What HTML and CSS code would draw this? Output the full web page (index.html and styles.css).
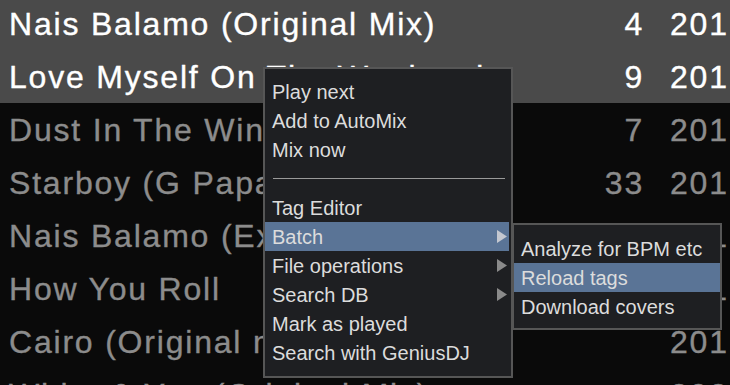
FILE: index.html
```html
<!DOCTYPE html>
<html>
<head>
<meta charset="utf-8">
<link rel="stylesheet" href="styles.css">
</head>
<body>
<div class="list">
  <div class="row sel"><span class="title">Nais Balamo (Original Mix)</span><span class="count">4</span><span class="year">2016</span></div>
  <div class="row sel"><span class="title">Love Myself On The Weekend</span><span class="count">9</span><span class="year">2016</span></div>
  <div class="row"><span class="title">Dust In The Wind</span><span class="count">7</span><span class="year">2016</span></div>
  <div class="row"><span class="title">Starboy (G Papa remix)</span><span class="count">33</span><span class="year">2016</span></div>
  <div class="row"><span class="title">Nais Balamo (Extended Mix)</span><span class="count">2</span><span class="year">2016</span></div>
  <div class="row"><span class="title">How You Roll</span><span class="count">5</span><span class="year">2016</span></div>
  <div class="row"><span class="title">Cairo (Original mix)</span><span class="count"></span><span class="year">2016</span></div>
  <div class="row"><span class="title">White &amp; You (Original Mix)</span><span class="count"></span><span class="year">2020</span></div>
</div>

<div class="menu">
  <div class="item">Play next</div>
  <div class="item">Add to AutoMix</div>
  <div class="item">Mix now</div>
  <div class="sep"><span class="line"></span></div>
  <div class="item">Tag Editor</div>
  <div class="item active">Batch<svg class="arrow" width="10" height="13" viewBox="0 0 10 13"><path d="M0 0 L10 6.5 L0 13 Z"/></svg></div>
  <div class="item">File operations<svg class="arrow" width="10" height="13" viewBox="0 0 10 13"><path d="M0 0 L10 6.5 L0 13 Z"/></svg></div>
  <div class="item">Search DB<svg class="arrow" width="10" height="13" viewBox="0 0 10 13"><path d="M0 0 L10 6.5 L0 13 Z"/></svg></div>
  <div class="item">Mark as played</div>
  <div class="item">Search with GeniusDJ</div>
</div>

<div class="submenu">
  <div class="item">Analyze for BPM etc</div>
  <div class="item active">Reload tags</div>
  <div class="item">Download covers</div>
</div>
</body>
</html>
```

FILE: styles.css
```css
html, body {
  margin: 0;
  padding: 0;
}
body {
  width: 730px;
  height: 385px;
  overflow: hidden;
  background: #0a0a0a;
  position: relative;
  font-family: "Liberation Sans", Arial, sans-serif;
}
.list {
  margin-top: -3px;
}
.row {
  display: grid;
  grid-template-columns: 580px 64px 84px;
  column-gap: 0;
  height: 53px;
  line-height: 54px;
  font-size: 32px;
  letter-spacing: 1.8px;
  -webkit-text-stroke: 0.35px currentColor;
  color: #8c8c8c;
  white-space: nowrap;
  overflow: hidden;
}
.row.sel {
  background: #4a4a4a;
  color: #ffffff;
}
.title {
  padding-left: 9px;
  overflow: visible;
}
.count {
  text-align: right;
}
.year {
  padding-left: 26px;
  overflow: hidden;
}

.menu {
  position: absolute;
  left: 263px;
  top: 67px;
  width: 250px;
  height: 311px;
  box-sizing: border-box;
  border: 2px solid #565656;
  background: #1e1f22;
  padding: 8px 2px 9px 0;
  z-index: 2;
}
.submenu {
  position: absolute;
  left: 512px;
  top: 223px;
  width: 210px;
  height: 107px;
  box-sizing: border-box;
  border: 2px solid #565656;
  background: #1e1f22;
  padding: 9px 0 7px 0;
  z-index: 3;
}
.item {
  display: flex;
  align-items: center;
  justify-content: space-between;
  height: 29px;
  line-height: 29px;
  padding-left: 7px;
  padding-top: 2px;
  box-sizing: border-box;
  font-size: 20px;
  color: #dcdcdc;
  white-space: nowrap;
}
.item.active {
  background: #5a7496;
}
.arrow {
  margin-right: 2px;
  margin-top: -2px;
  fill: #8a8a8a;
}
.item.active .arrow {
  fill: #c4c8d0;
}
.sep {
  height: 29px;
  display: flex;
  align-items: center;
  padding: 0 4px 0 8px;
}
.line {
  flex: 1;
  height: 1px;
  background: #9a9a9a;
}
```
